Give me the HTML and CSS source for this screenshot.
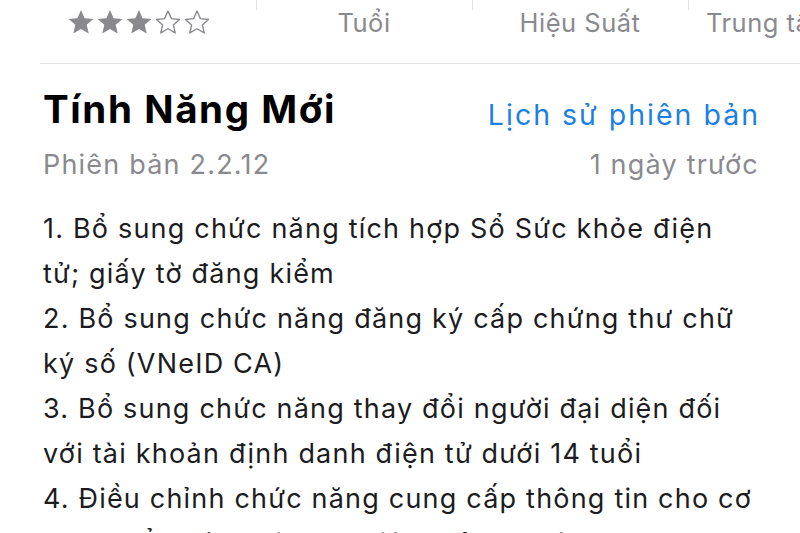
FILE: index.html
```html
<!DOCTYPE html>
<html lang="vi">
<head>
<meta charset="utf-8">
<title>Tính Năng Mới</title>
<link rel="stylesheet" href="styles.css">
</head>
<body>
<div class="info-bar">
  <div class="info-cell">
    <div class="stars">
      <svg class="star" viewBox="0 0 24 24"><path class="fill" d="M12 1.8l3.1 6.9 7.5.7-5.7 5 1.7 7.4L12 17.9l-6.6 3.9 1.7-7.4-5.7-5 7.5-.7z"/></svg>
      <svg class="star" viewBox="0 0 24 24"><path class="fill" d="M12 1.8l3.1 6.9 7.5.7-5.7 5 1.7 7.4L12 17.9l-6.6 3.9 1.7-7.4-5.7-5 7.5-.7z"/></svg>
      <svg class="star" viewBox="0 0 24 24"><path class="fill" d="M12 1.8l3.1 6.9 7.5.7-5.7 5 1.7 7.4L12 17.9l-6.6 3.9 1.7-7.4-5.7-5 7.5-.7z"/></svg>
      <svg class="star" viewBox="0 0 24 24"><path class="outline" d="M12 2.6l2.9 6.5 7 .7-5.3 4.7 1.6 6.9L12 17.8l-6.2 3.6 1.6-6.9-5.3-4.7 7-.7z"/></svg>
      <svg class="star" viewBox="0 0 24 24"><path class="outline" d="M12 2.6l2.9 6.5 7 .7-5.3 4.7 1.6 6.9L12 17.8l-6.2 3.6 1.6-6.9-5.3-4.7 7-.7z"/></svg>
    </div>
  </div>
  <div class="info-cell"><span class="info-label">Tuổi</span></div>
  <div class="info-cell"><span class="info-label">Hiệu Suất</span></div>
  <div class="info-cell left"><span class="info-label">Trung tâm Phát triển</span></div>
</div>

<section class="whats-new">
  <div class="head-row">
    <h2 class="title">Tính Năng Mới</h2>
    <a class="link">Lịch sử phiên bản</a>
  </div>
  <div class="meta-row">
    <span>Phiên bản 2.2.12</span>
    <span>1 ngày trước</span>
  </div>
  <p class="notes">1. Bổ sung chức năng tích hợp Sổ Sức khỏe điện<br>tử; giấy tờ đăng kiểm<br>2. Bổ sung chức năng đăng ký cấp chứng thư chữ<br>ký số (VNeID CA)<br>3. Bổ sung chức năng thay đổi người đại diện đối<br>với tài khoản định danh điện tử dưới 14 tuổi<br>4. Điều chỉnh chức năng cung cấp thông tin cho cơ<br>quan, tổ chức khi thực hiện thủ tục xác thực</p>
</section>
</body>
</html>
```

FILE: styles.css
```css
* { box-sizing: border-box; }
html, body {
  margin: 0;
  padding: 0;
  background: #ffffff;
  overflow: hidden;
}
body {
  width: 800px;
  height: 533px;
  font-family: Inter, "Noto Sans", "Liberation Sans", sans-serif;
  -webkit-font-smoothing: antialiased;
}
.info-bar {
  margin-left: 40px;
  height: 64px;
  display: grid;
  grid-template-columns: 216px 216px 216px 216px;
  border-bottom: 1px solid #e4e4e7;
  white-space: nowrap;
  overflow: hidden;
}
.info-cell {
  position: relative;
  display: flex;
  justify-content: center;
  padding-top: 8px;
}
.info-cell + .info-cell::before {
  content: "";
  position: absolute;
  left: 0;
  top: 0;
  width: 1px;
  height: 10px;
  background: #e2e2e6;
}
.info-cell.left {
  justify-content: flex-start;
  padding-left: 18px;
}
.info-label {
  font-size: 25.5px;
  letter-spacing: 0.5px;
  color: #8a8a8e;
  line-height: 30px;
}
.stars {
  display: flex;
  gap: 1px;
  margin-left: -18px;
  padding-top: 0;
}
.star {
  width: 28px;
  height: 28px;
}
.star .fill { fill: #8a8a8e; }
.star .outline { fill: none; stroke: #8a8a8e; stroke-width: 1.2; stroke-linejoin: round; }

.whats-new {
  padding: 0 42px 0 43px;
}
.head-row {
  display: flex;
  justify-content: space-between;
  align-items: baseline;
  margin-top: 22px;
}
.title {
  margin: 0;
  font-size: 38.5px;
  font-weight: 700;
  color: #000000;
  line-height: 46px;
  letter-spacing: 1.6px;
}
.link {
  font-size: 28.5px;
  letter-spacing: 2px;
  color: #1b7fe3;
  position: relative;
  top: 2px;
  margin-right: -2px;
}
.meta-row {
  display: flex;
  justify-content: space-between;
  font-size: 27px;
  letter-spacing: 1.2px;
  color: #8a8a8e;
  line-height: 34px;
  margin-top: 16px;
  margin-right: -1px;
}
.notes {
  margin: 24px 0 0;
  font-size: 27px;
  letter-spacing: 1.2px;
  line-height: 45px;
  color: #1c1c1e;
  white-space: nowrap;
}
```
